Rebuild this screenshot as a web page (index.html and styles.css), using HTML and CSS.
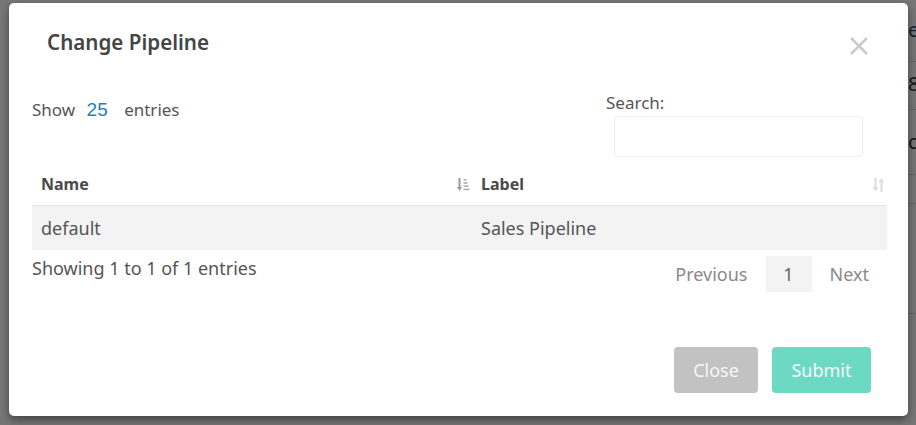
FILE: index.html
```html
<!DOCTYPE html>
<html lang="en">
<head>
<meta charset="utf-8">
<title>Change Pipeline</title>
<link rel="stylesheet" href="styles.css">
</head>
<body>
<div class="page">
  <div class="page-row r1"><span class="gutter"></span><span class="cell blue">e</span></div>
  <div class="page-row r2"><span class="gutter"></span><span class="cell">8</span></div>
  <div class="page-row r3"><span class="gutter"></span><span class="cell">c</span></div>
  <div class="page-row r4"><span class="gutter"></span><span class="cell"></span></div>
  <div class="page-row r5"><span class="gutter"></span><span class="cell"></span></div>
</div>
<div class="backdrop"></div>
<div class="modal">
  <div class="modal-header">
    <h4 class="modal-title">Change Pipeline</h4>
    <button class="close" aria-label="Close">
      <svg width="20" height="20" viewBox="0 0 20 20"><path d="M2 2 L18 18 M18 2 L2 18" stroke="#cbcbcb" stroke-width="2.6" fill="none"/></svg>
    </button>
  </div>
  <div class="modal-body">
    <div class="toolbar">
      <div class="length">Show <span class="len-val">25</span> entries</div>
      <div class="search">
        <label class="search-label">Search:</label>
        <input class="search-input" type="text">
      </div>
    </div>
    <div class="table">
      <div class="thead">
        <div class="th col-name"><span>Name</span>
          <svg class="sort" width="13" height="14" viewBox="0 0 13 14">
            <rect x="1.5" y="0" width="2" height="9" fill="#9a9a9a"/>
            <path d="M0 9 H5 L2.5 13 Z" fill="#9a9a9a"/>
            <rect x="6.5" y="1" width="3" height="1.6" fill="#b0b0b0"/>
            <rect x="6.5" y="4.2" width="4" height="1.6" fill="#b0b0b0"/>
            <rect x="6.5" y="7.4" width="5" height="1.6" fill="#b0b0b0"/>
            <rect x="6.5" y="10.6" width="6" height="1.6" fill="#b0b0b0"/>
          </svg>
        </div>
        <div class="th col-label"><span>Label</span>
          <svg class="sort" width="13" height="14" viewBox="0 0 13 14">
            <rect x="2.5" y="0" width="2" height="9" fill="#dcdcdc"/>
            <path d="M0.5 9 H6.5 L3.5 13.5 Z" fill="#dcdcdc"/>
            <path d="M6.5 4.5 H12.5 L9.5 0 Z" fill="#dcdcdc"/>
            <rect x="8.5" y="4.5" width="2" height="9.5" fill="#dcdcdc"/>
          </svg>
        </div>
      </div>
      <div class="tr">
        <div class="td col-name">default</div>
        <div class="td col-label">Sales Pipeline</div>
      </div>
    </div>
    <div class="table-foot">
      <div class="info">Showing 1 to 1 of 1 entries</div>
      <div class="paginate">
        <a class="page-btn">Previous</a>
        <a class="page-btn current">1</a>
        <a class="page-btn">Next</a>
      </div>
    </div>
  </div>
  <div class="modal-footer">
    <button class="btn btn-close">Close</button>
    <button class="btn btn-submit">Submit</button>
  </div>
</div>
</body>
</html>
```
FILE: styles.css
```css
* { box-sizing: border-box; }
html, body { margin: 0; padding: 0; }
body {
  width: 916px;
  height: 425px;
  overflow: hidden;
  position: relative;
  background: #ffffff;
  font-family: "Noto Sans", "Open Sans", sans-serif;
  color: #555555;
}
.page { display: flex; flex-direction: column; }
.page-row {
  display: grid;
  grid-template-columns: 906px 1fr;
  font-size: 20px;
  color: #333;
}
.page-row .cell { padding-left: 2px; border-bottom: 1px solid #dddddd; }
.page-row .blue { color: #1c4f86; }
.r1 { height: 62px; line-height: 60px; }
.r2 { height: 48px; line-height: 44px; }
.r3 { height: 50px; line-height: 64px; }
.r4 { height: 44px; }
.r5 { height: 110px; }
.backdrop {
  position: absolute;
  inset: 0;
  background: rgba(0, 0, 0, 0.535);
}
.modal {
  position: absolute;
  left: 9px;
  top: 3px;
  width: 899px;
  height: 413px;
  background: #ffffff;
  border-radius: 5px;
  box-shadow: 0 4px 10px rgba(0, 0, 0, 0.45);
  display: flex;
  flex-direction: column;
}
.modal-header {
  display: flex;
  justify-content: space-between;
  align-items: flex-start;
  padding: 24px 39px 0 38px;
  height: 56px;
}
.modal-title {
  margin: 0;
  font-size: 20.6px;
  line-height: 30px;
  font-weight: 600;
  color: #454545;
}
.close {
  border: 0;
  background: none;
  padding: 0;
  margin-top: 9px;
  width: 20px;
  height: 20px;
  display: block;
}
.close svg { display: block; }
.modal-body {
  padding: 0 21px 0 23px;
}
.toolbar {
  display: flex;
  justify-content: space-between;
  align-items: flex-start;
  margin-top: 32px;
}
.length {
  padding-top: 7px;
  font-size: 17px;
  line-height: 24px;
  color: #555;
  word-spacing: 7px;
}
.len-val {
  font-family: "Liberation Sans", Arial, sans-serif;
  color: #2a7bbf;
  font-size: 19px;
  padding: 0 5px 0 0;
}
.search {
  display: flex;
  flex-direction: column;
  align-items: flex-start;
  margin-right: 24px;
  width: 257px;
}
.search-label {
  font-size: 17px;
  line-height: 24px;
  color: #555;
  margin-bottom: 1px;
}
.search-input {
  margin-left: 8px;
  width: 249px;
  height: 41px;
  border: 1px solid #ececec;
  border-radius: 4px;
  background: #fff;
  outline: none;
}
.table { margin-top: 6px; }
.thead, .tr { display: flex; }
.thead { border-bottom: 1px solid #e6e6e6; height: 43px; }
.th {
  display: flex;
  justify-content: space-between;
  align-items: center;
  padding: 0 2px 0 9px;
  font-size: 16px;
  font-weight: 700;
  color: #4a4a4a;
  height: 42px;
}
.col-name { width: 440px; }
.col-label { flex: 1; }
.th .sort { display: block; margin-top: 1px; }
.tr { background: #f3f3f3; height: 44px; }
.td {
  padding: 0 9px;
  font-size: 18px;
  line-height: 44px;
  color: #555;
}
.table-foot {
  display: flex;
  justify-content: space-between;
  align-items: flex-start;
  padding-top: 6px;
}
.info {
  font-size: 18px;
  line-height: 24px;
  color: #555;
}
.paginate { display: flex; }
.page-btn {
  display: block;
  padding: 0 18px;
  height: 36px;
  line-height: 36px;
  font-size: 18px;
  color: #8a8a8a;
}
.page-btn.current {
  background: #f3f3f3;
  color: #666;
  min-width: 46px;
  text-align: center;
  padding: 0 17px;
}
.modal-footer {
  margin-top: auto;
  display: flex;
  justify-content: flex-end;
  gap: 14px;
  padding: 0 37px 23px 0;
}
.btn {
  border: 0;
  border-radius: 4px;
  height: 46px;
  font-family: "Noto Sans", "Open Sans", sans-serif;
  font-size: 18px;
  color: #f7f7f7;
  padding: 0;
}
.btn-close { width: 84px; background: #c2c2c2; }
.btn-submit { width: 99px; background: #6cd9c3; }
```
